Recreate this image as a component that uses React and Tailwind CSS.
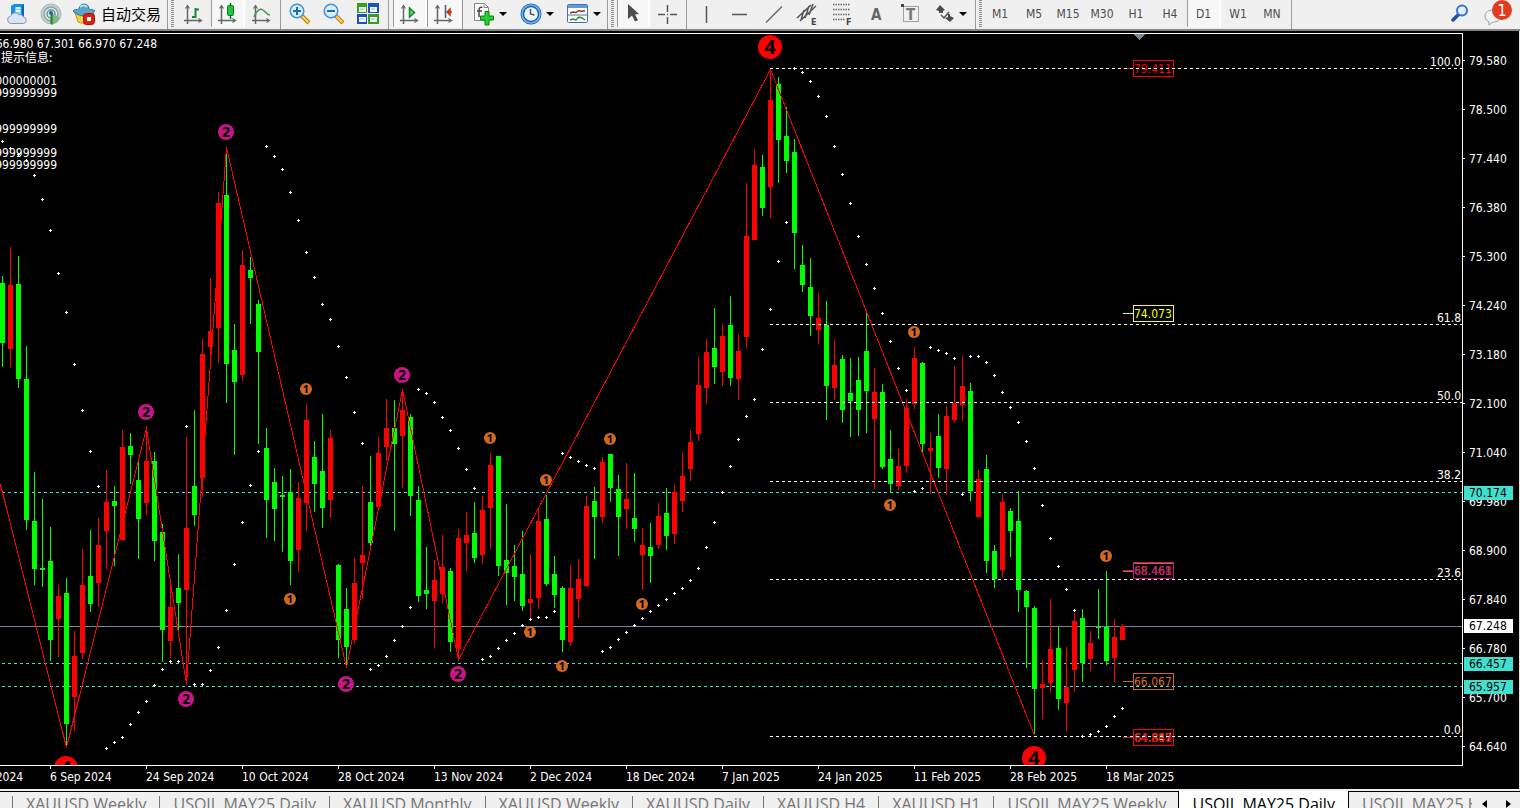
import React from "react";

const UP = "#ff0000";
const DOWN = "#00ff00";
const FIRST_X = 2;
const STEP = 8;

// One entry per bar: direction, high, low, body top, body bottom.
const CANDLES = `
D 276 367 283 343|U 247 367 285 349|D 256 388 284 379|D 346 530 379 520|D 472 585 521 569|D 499 587 568 570
D 527 661 561 640|U 585 657 596 619|D 578 747 593 724|U 631 731 656 697|U 549 659 585 653|D 530 612 576 604
U 518 607 545 583|U 470 569 502 531|D 486 566 501 506|U 430 541 447 540|D 433 484 446 455|D 461 559 480 519
U 426 515 461 503|D 452 561 461 541|D 524 662 532 630|U 585 658 607 641|D 554 630 588 603|U 437 685 528 590
D 410 526 486 515|U 339 497 354 478|U 278 367 331 347|U 192 363 203 328|D 153 403 195 364|D 324 455 350 382
U 250 381 265 375|D 257 324 270 278|D 300 444 304 352|D 428 538 448 500|D 468 541 482 509|D 476 552 495 497
D 469 585 492 561|U 482 572 498 550|U 404 531 420 503|D 441 512 457 484|D 414 528 471 508|U 430 518 438 500
D 564 658 565 640|D 588 667 609 647|U 558 644 583 640|U 486 599 555 563|D 456 547 502 543|U 437 511 453 507
U 399 461 428 447|D 400 531 428 444|U 389 488 410 436|D 414 516 417 496|D 486 602 500 596|D 547 609 590 594
U 560 648 580 601|U 535 603 567 594|D 568 652 571 642|U 529 659 538 649|U 512 571 535 543|D 502 563 533 558
U 496 564 510 555|U 453 549 465 508|D 456 576 456 566|D 504 605 560 573|D 545 601 566 577|D 531 611 574 606
U 554 618 599 603|U 507 609 521 598|D 495 586 519 584|D 556 608 574 595|D 586 652 588 640|U 565 646 588 642
U 559 618 579 599|U 496 587 506 586|D 487 559 501 517|U 457 523 462 517|D 454 502 454 488|D 475 556 489 517
U 463 529 499 509|D 473 542 518 529|U 528 590 545 555|D 523 583 547 556|U 503 549 516 545|D 488 550 513 536
U 485 544 492 534|U 452 512 476 501|U 430 481 442 469|U 357 441 385 434|U 339 404 352 388|D 308 384 348 367
U 324 386 336 372|D 296 386 325 378|U 334 400 351 379|U 183 348 236 337|U 149 240 165 240|D 155 216 167 208
U 69 218 100 187|D 77 183 84 140|D 107 173 136 161|D 139 269 152 233|D 245 292 265 285|D 258 336 287 316
U 293 344 318 330|D 301 420 325 386|U 340 400 365 388|D 355 423 359 410|D 358 437 393 401|D 357 436 380 410
D 313 433 351 391|U 368 489 392 419|D 384 469 392 467|D 430 492 459 484|U 449 490 466 486|U 399 473 408 466
U 347 409 358 404|D 362 452 363 444|U 433 494 448 451|D 414 478 436 468|U 406 495 416 469|U 366 423 403 420
U 356 421 386 405|D 383 501 391 491|U 470 517 479 517|D 455 573 469 561|D 545 588 551 579|U 494 578 502 570
D 508 557 511 531|D 491 612 521 590|D 590 668 591 607|D 606 735 608 689|U 660 719 684 688|U 599 693 649 683
D 627 710 648 699|U 647 731 687 703|U 613 692 621 670|D 609 682 618 663|U 631 671 643 659|D 589 639 627 628
D 571 665 627 661|U 619 682 637 658|U 624 640 626 640`
  .trim()
  .split(/[|\n]/)
  .map((row, i) => {
    const [dir, high, low, top, bottom] = row.split(" ");
    return { x: FIRST_X + i * STEP, color: dir === "U" ? UP : DOWN, high: +high, low: +low, top: +top, bottom: +bottom };
  });

// Parabolic SAR, one value per bar.
const SAR = [
  141, 148, 154, 160, 175, 199, 230, 273, 312, 364, 410, 451, 486, 748, 742, 737, 724, 712, 701, 685, 669, 661, 661, 426,
  684, 684, 670, 647, 610, 564, 522, 485, 451, 146, 156, 169, 192, 220, 252, 277, 304, 319, 346, 377, 412, 443, 669, 665,
  656, 640, 626, 607, 389, 393, 402, 417, 430, 448, 469, 488, 659, 656, 648, 640, 633, 625, 619, 617, 617, 611, 453, 457,
  461, 465, 468, 651, 647, 639, 632, 625, 618, 611, 605, 599, 593, 588, 580, 568, 547, 522, 492, 466, 439, 416, 399, 349,
  309, 261, 222, 68, 72, 81, 96, 116, 146, 174, 203, 236, 264, 288, 313, 341, 368, 390, 491, 488, 347, 350, 353, 358,
  494, 356, 356, 362, 375, 392, 407, 422, 441, 468, 505, 538, 566, 589, 610, 736, 734, 731, 726, 716, 708,
];

const ZIGZAG = "0,484 66,747 146,428 186,684 226,147 346,667 402,389 458,659 770,69 1034,735";

const FIBS = [[68, "100.0"], [324, "61.8"], [402, "50.0"], [481, "38.2"], [579, "23.6"], [736, "0.0"]];

const MARKS = {
  1: { r: 6, size: 11, fill: "#d2691e", at: [[306, 389], [290, 599], [490, 438], [546, 480], [530, 632], [562, 666], [610, 439], [642, 604], [914, 332], [890, 505], [1106, 556]] },
  2: { r: 8, size: 14, fill: "#c71585", at: [[146, 412], [226, 132], [186, 699], [346, 684], [402, 375], [458, 674]] },
  4: { r: 12, size: 20, fill: "#ff0000", at: [[770, 47], [66, 768], [1034, 758]] },
};

const PRICE_BOXES = [
  { y: 60, color: "#ff0000", texts: [["79.411", "#ff0000"]] },
  { y: 305, color: "#ffff00", texts: [["74.073", "#ffff00"]] },
  { y: 562, color: "#c71585", inner: "#d2691e", texts: [["68.461", "#d2691e"], ["68.468", "#c71585"]] },
  { y: 673, color: "#d2691e", texts: [["66.067", "#d2691e"]] },
  { y: 729, color: "#ff0000", texts: [["64.847", "#ffff00"], ["64.889", "#c71585"], ["64.882", "#ff0000"]] },
];

const PRICES = ["79.580", "78.500", "77.440", "76.380", "75.300", "74.240", "73.180", "72.100", "71.040", "69.980", "68.900", "67.840", "66.780", "65.700", "64.640"];
const DATES = ["19 Aug 2024", "6 Sep 2024", "24 Sep 2024", "10 Oct 2024", "28 Oct 2024", "13 Nov 2024", "2 Dec 2024", "18 Dec 2024", "7 Jan 2025", "24 Jan 2025", "11 Feb 2025", "28 Feb 2025", "18 Mar 2025"];
const FRAMES = ["M1", "M5", "M15", "M30", "H1", "H4", "D1", "W1", "MN"];
const TABS = ["XAUUSD.Weekly", "USOIL.MAY25.Daily", "XAUUSD.Monthly", "XAUUSD.Weekly", "XAUUSD.Daily", "XAUUSD.H4", "XAUUSD.H1", "USOIL.MAY25.Weekly"];

function Icon({ children, w = 22 }) {
  return (
    <svg width={w} height="22" viewBox={`0 0 ${w} 22`} fill="none" aria-hidden="true" className="shrink-0 overflow-visible">
      {children}
    </svg>
  );
}

const Axes = () => (
  <g stroke="#666" strokeWidth="1.5">
    <path d="M4.5 3v18M1 17.5h17" />
    <path d="M2.500 5.500l2-3 2 3M15.500 15.500l3 2-3 2" strokeWidth="1.200" />
  </g>
);

const icons = {
  server: (
    <Icon>
      <path d="M5 3l3-2h10v12l-3 2H5z" fill="#1590e8" />
      <path d="M9 4h6v9H9z" fill="#7fd4ff" />
      <path d="M10 5h4M10 8h4" stroke="#fff" strokeWidth="1.500" />
      <path d="M16 3l2-2v12l-2 2z" fill="#0a62b8" />
      <path d="M5 20.500a3.800 3.800 0 01-.3-7.500 4.500 4.500 0 018-1.200 3.500 3.500 0 014.600 2.200 3.300 3.300 0 01.4 6.500z" fill="#dde5f2" stroke="#8596b8" />
    </Icon>
  ),
  antenna: (
    <Icon>
      <circle cx="11" cy="11" r="10" fill="#c9d3d3" stroke="#a3b1b3" />
      <circle cx="11" cy="11" r="7" stroke="#8ba5a7" strokeWidth="1.500" fill="#dde5e5" />
      <circle cx="11" cy="11" r="4" stroke="#6f9291" strokeWidth="1.500" />
      <path d="M11 10h1l8 5-3 4-5 3h-1z" fill="#7fb884" />
      <path d="M11.500 11v10" stroke="#178a22" strokeWidth="2" />
      <circle cx="11" cy="10" r="2" fill="#245fae" />
    </Icon>
  ),
  robot: (
    <Icon>
      <path d="M2 10l3 9 7 2 6-2 3-9-9 3z" fill="#f4cf4a" stroke="#c99a1c" />
      <path d="M0 8c1-2 4-1 6-2 0-3 2-5 5-5s5 2 5 5c2 1 4 0 6 2-2 3-7 5-11 5S2 11 0 8z" fill="#5aa5cc" stroke="#32809f" />
      <path d="M7 4c2-2 5-2 7 0" stroke="#bde6f7" strokeWidth="2" />
      <rect x="10.500" y="10.500" width="11" height="11" rx="3" fill="#d9230f" stroke="#a71200" />
      <rect x="14" y="14" width="4" height="4" fill="#fff" />
    </Icon>
  ),
  bars: <Icon><Axes /><path d="M9 14h3.500M12.500 15V5M12.500 6.500H16" stroke="#168a2a" strokeWidth="2" /></Icon>,
  candles: (
    <Icon><Axes /><path d="M13.500 0v16" stroke="#0a6b18" strokeWidth="1.500" /><rect x="10.500" y="2.500" width="6" height="10" rx="1" fill="#1fc438" stroke="#08801a" /></Icon>
  ),
  line: <Icon><Axes /><path d="M3 14c3-7 6-9 9-7s4 5 7 5" stroke="#3f9a4a" strokeWidth="1.500" /></Icon>,
  zoomIn: (
    <Icon><path d="M13 13l7 7" stroke="#b77c0c" strokeWidth="4" /><path d="M13 13l6.500 6.500" stroke="#ffd650" strokeWidth="2" /><circle cx="8" cy="8" r="6.800" fill="#d5efff" stroke="#4a90cf" strokeWidth="1.500" /><path d="M4 8h8M8 4v8" stroke="#1f6bb0" strokeWidth="2" /></Icon>
  ),
  zoomOut: (
    <Icon><path d="M13 13l7 7" stroke="#b77c0c" strokeWidth="4" /><path d="M13 13l6.500 6.500" stroke="#ffd650" strokeWidth="2" /><circle cx="8" cy="8" r="6.800" fill="#d5efff" stroke="#4a90cf" strokeWidth="1.500" /><path d="M4 8h8" stroke="#1f6bb0" strokeWidth="2" /></Icon>
  ),
  tiles: (
    <Icon>
      <path d="M0 0h10v10H0zM11 11h11v10H11z" fill="#3c9d1d" />
      <path d="M11 0h11v10H11zM0 11h10v10H0z" fill="#1c50c4" />
      <path d="M2 4h7v5H2zM13 4h7v5h-7zM2 14h7v5H2zM13 14h7v5h-7z" fill="#edf5ff" />
      <path d="M3 6h4M14 6h4M3 16h4M14 16h4" stroke="#9cc0a0" />
    </Icon>
  ),
  scroll: <Icon><Axes /><path d="M10.500 5l5 4.500-5 4.500z" fill="#6fd680" stroke="#0d8a25" strokeWidth="1.500" /></Icon>,
  shift: <Icon><Axes /><path d="M12.500 2v13" stroke="#2c5f9e" strokeWidth="1.500" /><path d="M14 9h5M14 9l3-3v6z" stroke="#c8370e" fill="#c8370e" strokeWidth="1.500" /></Icon>,
  indicator: (
    <Icon>
      <path d="M1.500 .5h10l4 4v13h-14z" fill="#fff" stroke="#888" />
      <path d="M11 .5v4h4" stroke="#888" />
      <path d="M9.500 4.500c-3-1-3.500 1-3.500 3V14M4 8h5" stroke="#444" strokeWidth="1.500" />
      <path d="M12 8.500h4v4.500h4.500v4H16v5h-4v-5H7.500v-4H12z" fill="#25cf30" stroke="#07850f" />
    </Icon>
  ),
  clock: (
    <Icon>
      <circle cx="11" cy="11" r="10.500" fill="#1c62bb" />
      <circle cx="11" cy="11" r="9" stroke="#6db6f5" strokeWidth="1.500" />
      <circle cx="11" cy="11" r="6.800" fill="#f1f6fb" />
      <path d="M10.500 6v5l4 1" stroke="#555" strokeWidth="1.500" />
    </Icon>
  ),
  template: (
    <Icon>
      <rect x=".5" y="1.500" width="20" height="18" rx="1" fill="#fff" stroke="#3f74b3" />
      <path d="M1 2h19v3H1z" fill="#5b9be0" />
      <path d="M1 12h19" stroke="#4778b0" />
      <path d="M3 10l3-1 3 .5 3-2 2 1 4-1" stroke="#a32e12" strokeWidth="1.500" />
      <path d="M3 17l3-1 3 1 3-3 3 1 3 2" stroke="#27892c" strokeWidth="1.500" />
    </Icon>
  ),
  pointer: <Icon w={12}><path d="M1 1v15l4-3.500 3 6 3-1.300-3-5.700 4-.5z" fill="#4c4c4c" /></Icon>,
  cross: <Icon><path d="M11.500 2v7M11.500 14v7M2 11.500h7M14 11.500h7M11 11.500h1" stroke="#555" strokeWidth="1.500" /></Icon>,
  vline: <Icon><path d="M11.500 3v17" stroke="#555" strokeWidth="1.500" /></Icon>,
  hline: <Icon><path d="M3 11.500h15" stroke="#555" strokeWidth="1.500" /></Icon>,
  trend: <Icon><path d="M3 19.500L19 3.500" stroke="#666" strokeWidth="1.500" /></Icon>,
  channel: (
    <Icon>
      <path d="M0 15L14 2M3 18L19 3M4 17l3-10M8 15l4-12M12 12l4-11" stroke="#555" strokeWidth="1.500" />
      <text x="14" y="22" fontSize="9" fontWeight="700" fill="#444">E</text>
    </Icon>
  ),
  fibo: (
    <Icon>
      <path d="M2 1.500h17M2 6.500h17M2 11.500h17M2 16.500h12" stroke="#666" strokeWidth="1.500" strokeDasharray="1.500 1" />
      <text x="15" y="22" fontSize="9" fontWeight="700" fill="#444">F</text>
    </Icon>
  ),
  text: <Icon><text x="6" y="17" fontSize="15" fontWeight="700" fill="#666">A</text></Icon>,
  label: (
    <Icon>
      <rect x="4.500" y="3.500" width="15" height="15" stroke="#555" strokeDasharray="1 1" />
      <path d="M2 1h3v3H2z" fill="#444" />
      <text x="7" y="17" fontSize="15" fontWeight="700" fill="#777">T</text>
    </Icon>
  ),
  shapes: (
    <Icon w={20}>
      <path d="M5 2l5 5-2 1v2H4V8L1 7zM15 11v2l4 2-4 4-5-4 3-1v-3z" fill="#4c4c4c" />
      <path d="M6 12l3 3 5-6" stroke="#555" strokeWidth="1.500" />
    </Icon>
  ),
};

const PRESSED = "border-r-2 border-l border-r-white border-l-[#9a9a9a] bg-[#f7f7f7]";

function ToolButton({ icon, label, pressed, width = "w-[34px]" }) {
  return (
    <button
      type="button"
      aria-label={label}
      aria-pressed={pressed}
      className={`flex h-[27px] shrink-0 items-center justify-center ${width} ${pressed ? PRESSED : ""}`}
    >
      {icons[icon]}
    </button>
  );
}

function DropButton({ icon, label }) {
  return (
    <button type="button" aria-label={label} className="flex h-[27px] w-[47px] shrink-0 items-center justify-center gap-1">
      {icons[icon]}
      <svg width="8" height="4" viewBox="0 0 8 4" aria-hidden="true"><path d="M0 0h8L4 4z" fill="#000" /></svg>
    </button>
  );
}

const Sep = ({ space = "" }) => <span className={`h-[29px] w-px shrink-0 bg-[#9a9a9a] ${space}`} />;
const Grip = ({ space = "mr-[3px]" }) => (
  <span className={`ml-[3px] h-[27px] w-[3px] shrink-0 bg-[repeating-linear-gradient(to_bottom,#8c8c8c_0_1px,#f0f0f0_1px_2px)] ${space}`} />
);

function Toolbar() {
  return (
    <header className="flex h-[31px] shrink-0 items-start overflow-hidden border-b-2 border-[#858585] bg-[#f0f0f0]">
      <ToolButton icon="server" label="Cloud server" />
      <ToolButton icon="antenna" label="Signals" />
      <button type="button" className="flex h-[27px] w-[99px] shrink-0 items-center gap-1.5 pl-[5px] font-['Noto_Sans_CJK_SC',sans-serif] text-[15px] leading-none whitespace-nowrap text-black">
        {icons.robot}
        自动交易
      </button>
      <Sep />
      <Grip />
      <ToolButton icon="bars" label="Bar chart" />
      <ToolButton icon="candles" label="Candlesticks" pressed />
      <ToolButton icon="line" label="Line chart" />
      <Sep space="ml-px mr-[2px]" />
      <ToolButton icon="zoomIn" label="Zoom in" />
      <ToolButton icon="zoomOut" label="Zoom out" />
      <ToolButton icon="tiles" label="Tile windows" />
      <Sep space="ml-[3px] mr-1" />
      <ToolButton icon="scroll" label="Auto scroll" pressed />
      <ToolButton icon="shift" label="Chart shift" pressed />
      <Sep space="ml-px mr-[3px]" />
      <DropButton icon="indicator" label="Indicators" />
      <DropButton icon="clock" label="Periods" />
      <DropButton icon="template" label="Templates" />
      <Sep />
      <Grip />
      <ToolButton icon="pointer" label="Cursor" pressed width="w-[33px]" />
      <ToolButton icon="cross" label="Crosshair" width="w-[33px]" />
      <Sep space="ml-[3px] mr-[2px]" />
      <ToolButton icon="vline" label="Vertical line" />
      <ToolButton icon="hline" label="Horizontal line" />
      <ToolButton icon="trend" label="Trend line" />
      <ToolButton icon="channel" label="Equidistant channel" />
      <ToolButton icon="fibo" label="Fibonacci" />
      <ToolButton icon="text" label="Text" />
      <ToolButton icon="label" label="Text label" />
      <DropButton icon="shapes" label="Arrows" />
      <Sep space="ml-px" />
      <Grip space="mr-px" />
      {FRAMES.map((f) => (
        <button
          key={f}
          type="button"
          aria-pressed={f === "D1"}
          className={`h-[27px] w-[34px] shrink-0 text-center text-xs text-[#4d4d4d] ${f === "D1" ? PRESSED : ""}`}
        >
          {f}
        </button>
      ))}
      <Sep space="ml-[2px]" />
      <div className="ml-auto flex items-center gap-3 pr-2">
        <button type="button" aria-label="Search" className="flex h-[27px] w-5 items-center justify-center">
          <svg width="20" height="20" viewBox="0 0 20 20" fill="none" aria-hidden="true">
            <path d="M9 10l-6 6" stroke="#1e4fb4" strokeWidth="3.500" strokeLinecap="round" />
            <circle cx="12" cy="6.500" r="5" fill="#e2edfc" stroke="#3a6fce" strokeWidth="2" />
          </svg>
        </button>
        <button type="button" aria-label="Notifications: 1" className="flex h-[27px] w-[30px] items-center justify-center">
          <svg width="30" height="27" viewBox="0 0 30 27" fill="none" aria-hidden="true">
            <path d="M3 16c0-4 4-6 8-6s8 2 8 6-4 6-8 6l-4 3v-3c-2-1-4-3-4-6z" fill="#f2f2f5" stroke="#9a9ba5" />
            <circle cx="20" cy="10" r="10" fill="#e23a1e" />
            <text x="20" y="16" textAnchor="middle" fontSize="16" fill="#fff">1</text>
          </svg>
        </button>
      </div>
    </header>
  );
}

function Plot() {
  return (
    <svg width="100%" height="100%" className="block" role="img" aria-label="USOIL.MAY25 Daily" fontSize="12">
      <g transform="translate(0 -34)">
        <g shapeRendering="crispEdges">
          <path d="M1133 34h12l-6 6z" fill="#778899" />
          <line x1="0" x2="100%" y1="626.5" y2="626.5" stroke="#778899" />
          {[492, 663, 686].map((y) => (
            <line key={y} x1="2" x2="100%" y1={y + 0.5} y2={y + 0.5} stroke="#40e0d0" strokeDasharray="3 3" />
          ))}
          {CANDLES.map((c) => (
            <g key={c.x} fill={c.color}>
              <rect x={c.x} y={c.high} width="1" height={c.low - c.high} />
              <rect x={c.x - 2} y={c.top} width="5" height={c.bottom - c.top} />
            </g>
          ))}
          <polyline points={ZIGZAG} transform="translate(.5 .5)" fill="none" stroke="#ff0000" />
          <g fill="#fff">
            {SAR.map((y, i) => {
              const x = FIRST_X + i * STEP;
              return <path key={i} d={`M${x} ${y - 1}h1v1h1v1h-1v1h-1v-1h-1v-1h1z`} />;
            })}
          </g>
        </g>
        <g fontFamily="'Noto Sans', sans-serif" fontWeight="700" textAnchor="middle">
          {Object.entries(MARKS).map(([n, m]) =>
            m.at.map(([x, y]) => (
              <g key={`${x}-${y}`}>
                <circle cx={x} cy={y} r={m.r} fill={m.fill} />
                <text x={x} y={y + m.size * 0.36} fontSize={m.size} fill="#000">{n}</text>
              </g>
            ))
          )}
        </g>
        {PRICE_BOXES.map((b) => (
          <g key={b.y}>
            <path d={`M1123 ${b.y + 8.5}h10`} stroke={b.color} shapeRendering="crispEdges" />
            {b.inner && <path d={`M1123 ${b.y + 9.5}h10M1134 ${b.y + 1.5}h39`} stroke={b.inner} shapeRendering="crispEdges" />}
            <rect x="1133.5" y={b.y + 0.5} width="40" height="16" fill="none" stroke={b.color} shapeRendering="crispEdges" />
            {b.texts.map(([t, fill]) => (
              <text key={t} x="1134" y={b.y + 13} fill={fill}>{t}</text>
            ))}
          </g>
        ))}
        {FIBS.map(([y, t]) => (
          <g key={t}>
            <line x1="770" x2="100%" y1={y + 0.5} y2={y + 0.5} stroke="#fff" strokeDasharray="3 3" shapeRendering="crispEdges" />
            <svg x="100%" y={y - 2} overflow="visible"><text x="-1" y="0" textAnchor="end" fill="#fff">{t}</text></svg>
          </g>
        ))}
        <g fill="#fff" textAnchor="end">
          <text x="157" y="48">USOIL.MAY25,Daily 66.980 67.301 66.970 67.248</text>
          <text x="57" y="85">0.0000000001</text>
          {[97, 133, 157, 169].map((y) => <text key={y} x="57" y={y}>0.9999999999</text>)}
        </g>
        <text x="1" y="62" fill="#fff" fontFamily="'Noto Sans CJK SC', sans-serif">提示信息:</text>
      </g>
    </svg>
  );
}

function PriceAxis() {
  const tag = "absolute left-px flex h-3.5 w-[49px] items-center pl-[5px] leading-none";
  return (
    <div className="relative w-14 shrink-0 pt-[3px]">
      {PRICES.map((p) => (
        <div key={p} className="flex h-[49px] items-center gap-1 leading-none">
          <span className="h-px w-0.5 bg-white" />
          {p}
        </div>
      ))}
      <span className={`${tag} top-[453px] bg-[#40e0d0] text-black`}>70.174</span>
      <span className={`${tag} top-[586px] bg-white text-black`}>67.248</span>
      <span className={`${tag} top-[624px] bg-[#40e0d0] text-black`}>66.457</span>
      <span className={`${tag} top-[647px] bg-[#40e0d0] text-black`}>65.957</span>
    </div>
  );
}

function Tabs() {
  return (
    <nav className="flex h-[19px] shrink-0 items-start overflow-hidden border-t-2 border-[#f0f0f0] bg-[#f0f0f0] font-['Open_Sans',sans-serif] text-base leading-none whitespace-nowrap">
      <div className="flex h-[25px] items-center border-t border-black pl-3 text-[#757575]">
        {TABS.map((t, i) => (
          <a key={i} href="#chart" className="flex items-center border-l border-[#757575] px-[13px] last:pr-3">{t}</a>
        ))}
      </div>
      <a href="#chart" aria-current="page" className="flex h-[25px] items-center border-x border-black bg-white px-[13px] text-black">USOIL.MAY25.Daily</a>
      <div className="flex h-[25px] min-w-0 flex-1 items-center border-t border-black text-[#757575]">
        <a href="#chart" className="min-w-0 flex-1 overflow-hidden pl-[13px] leading-6">USOIL.MAY25.H4</a>
        <button type="button" aria-label="Previous tab" className="flex w-6 shrink-0 justify-center">
          <svg width="5" height="8" viewBox="0 0 5 8" aria-hidden="true"><path d="M5 0v8L0 4z" fill="#000" /></svg>
        </button>
        <button type="button" aria-label="Next tab" className="flex w-6 shrink-0 justify-center">
          <svg width="5" height="8" viewBox="0 0 5 8" aria-hidden="true"><path d="M0 0v8l5-4z" fill="#000" /></svg>
        </button>
      </div>
    </nav>
  );
}

export default function App() {
  return (
    <div className="flex h-screen flex-col overflow-hidden bg-black font-['DejaVu_Sans_Condensed','DejaVu_Sans',sans-serif] text-xs text-white">
      <Toolbar />
      <main id="chart" className="flex min-h-0 flex-1 flex-col border-r border-[#e3e3e3] pt-0.5">
        <div className="flex min-h-0 flex-1">
          <div className="min-w-0 flex-1 overflow-hidden border-t border-r border-b border-white">
            <Plot />
          </div>
          <PriceAxis />
        </div>
        <div className="flex h-[23px] shrink-0 overflow-hidden">
          <div className="-ml-[46px] flex">
            {DATES.map((d) => (
              <div key={d} className="w-24 shrink-0 whitespace-nowrap">
                <div className="h-[3px] w-px bg-white" />
                <div className="leading-4">{d}</div>
              </div>
            ))}
          </div>
        </div>
      </main>
      <Tabs />
    </div>
  );
}
